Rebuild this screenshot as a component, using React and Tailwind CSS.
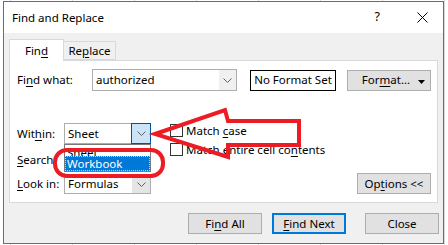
import React from 'react';

const U = ({ children }) => (
  <span className="underline decoration-1 underline-offset-[2px]">{children}</span>
);

function Chevron() {
  return (
    <svg width="9" height="5" viewBox="0 0 9 5">
      <path d="M0.5 0.5 L4.5 4.5 L8.5 0.5" fill="none" stroke="#606060" strokeWidth="1" />
    </svg>
  );
}

function Select({ value, width, height, pressed, children }) {
  return (
    <div className="relative" style={{ width, height }}>
      <div className="flex h-full w-full border border-[#adadad] bg-white">
        <div className="flex flex-1 items-center pl-[3px]">{value}</div>
        <div
          className={`flex w-[18px] items-center justify-center ${
            pressed ? 'bg-[#cce4f7] outline outline-1 outline-[#005499]' : 'bg-[#e5e5e5]'
          }`}
        >
          <Chevron />
        </div>
      </div>
      {children}
    </div>
  );
}

function Btn({ children, className = '' }) {
  return (
    <div className={`flex items-center justify-center border border-[#adadad] bg-[#e1e1e1] ${className}`}>
      {children}
    </div>
  );
}

function Check({ children }) {
  return (
    <div className="flex items-center gap-[3px] h-[13px]">
      <div className="h-[13px] w-[13px] border border-[#333333] bg-white" />
      <span>{children}</span>
    </div>
  );
}

export default function App() {
  return (
    <div className="relative h-[245px] w-[448px] overflow-hidden bg-white bg-[repeating-linear-gradient(90deg,#dadada_0_1px,transparent_1px_62px)] bg-[position:10px_0] pl-[3px] pt-[1px] font-['Noto_Sans',sans-serif] text-[11.5px] leading-none text-black">
      <div className="flex h-[243px] w-[441px] flex-col border border-[#2b79d0] bg-[#f0f0f0]">
        {/* Title bar */}
        <div className="flex h-[31px] items-center bg-white pl-[8px]">
          <span>Find and Replace</span>
          <span className="ml-auto mr-[37px] text-[12.5px]">?</span>
          <svg width="11" height="11" viewBox="0 0 11 11" className="mr-[15px]">
            <path d="M0.5 0.5 L10.5 10.5 M10.5 0.5 L0.5 10.5" stroke="#000" strokeWidth="1" />
          </svg>
        </div>

        {/* Tabs */}
        <div className="flex items-end pl-[5px] pt-[6px]">
          <div className="relative z-10 -mb-px flex h-[22px] w-[55px] items-center justify-center border border-b-0 border-[#d9d9d9] bg-white">
            <span>Fin<U>d</U></span>
          </div>
          <div className="flex h-[19px] w-[52px] items-center justify-center border border-l-0 border-[#d9d9d9] bg-[#f0f0f0]">
            <span>Re<U>p</U>lace</span>
          </div>
        </div>

        {/* Panel */}
        <div className="mx-[5px] flex h-[143px] flex-col border border-[#d9d9d9] bg-white pl-[7px] pr-[6px] pt-[8px]">
          <div className="flex h-[22px] items-center">
            <span className="w-[75px]">Fi<U>n</U>d what:</span>
            <div className="flex h-[22px] w-[145px] border border-[#adadad] bg-white">
              <div className="flex flex-1 items-center pl-[3px]">authorized</div>
              <div className="flex w-[17px] items-center justify-center bg-[#f0f0f0]">
                <Chevron />
              </div>
            </div>
            <div className="ml-[13px] flex h-[21px] w-[86px] items-center justify-center border border-black">
              No Format Set
            </div>
            <Btn className="ml-auto h-[21px] w-[84px] relative">
              <span className="pr-[6px]">For<U>m</U>at...</span>
              <svg width="7" height="4" viewBox="0 0 7 4" className="absolute right-[5px] top-[9px]">
                <path d="M0 0 H7 L3.5 4 Z" fill="#000" />
              </svg>
            </Btn>
          </div>

          <div className="mt-[32px] flex">
            <div className="flex w-[144px] flex-col">
              <div className="flex h-[21px] items-center">
                <span className="w-[47px]">Wit<U>h</U>in:</span>
                <Select value="Sheet" width={87} height={21} pressed>
                  <div className="absolute left-0 top-full z-20 flex w-[87px] flex-col border border-[#7a7a7a] bg-white">
                    <div className="h-[11px] overflow-hidden pl-[2px] pt-[1px] leading-[14px]">Sheet</div>
                    <div className="flex h-[15px] items-center bg-[#0078d7] pl-[2px] text-white outline outline-1 -outline-offset-1 outline-dotted outline-[#f8c67e]">
                      Workbook
                    </div>
                  </div>
                </Select>
              </div>
              <div className="mt-[5px] flex h-[21px] items-center">
                <span className="w-[47px]"><U>S</U>earch:</span>
                <Select value="" width={87} height={21} />
              </div>
              <div className="mt-[4px] flex h-[20px] items-center">
                <span className="w-[47px]"><U>L</U>ook in:</span>
                <Select value="Formulas" width={87} height={20} />
              </div>
            </div>

            <div className="ml-[9px] flex flex-col gap-[6px] pt-[1px]">
              <Check>Match <U>c</U>ase</Check>
              <Check>Match entire cell co<U>n</U>tents</Check>
            </div>

            <div className="ml-auto flex flex-col justify-end">
              <Btn className="h-[21px] w-[74px]">Op<U>t</U>ions &lt;&lt;</Btn>
            </div>
          </div>
        </div>

        {/* Footer buttons */}
        <div className="mt-[10px] flex pl-[184px]">
          <Btn className="h-[21px] w-[74px]">Fi<U>n</U>d All</Btn>
          <div className="ml-[10px] flex h-[21px] w-[74px] items-center justify-center border-2 border-[#0078d7] bg-[#e1e1e1]">
            <U>F</U>ind Next
          </div>
          <Btn className="ml-[19px] h-[21px] w-[74px]">Close</Btn>
        </div>
      </div>

      {/* Red annotations */}
      <svg className="pointer-events-none absolute left-0 top-0 z-30" width="448" height="245" viewBox="0 0 448 245">
        <polygon
          points="155,134 225,110 228,121 299,121 299,145 228,145 228,157"
          fill="none"
          stroke="#ed1c24"
          strokeWidth="4"
          strokeLinejoin="miter"
        />
        <rect x="55" y="150" width="108" height="26" rx="12" fill="none" stroke="#ed1c24" strokeWidth="4" />
      </svg>
    </div>
  );
}
